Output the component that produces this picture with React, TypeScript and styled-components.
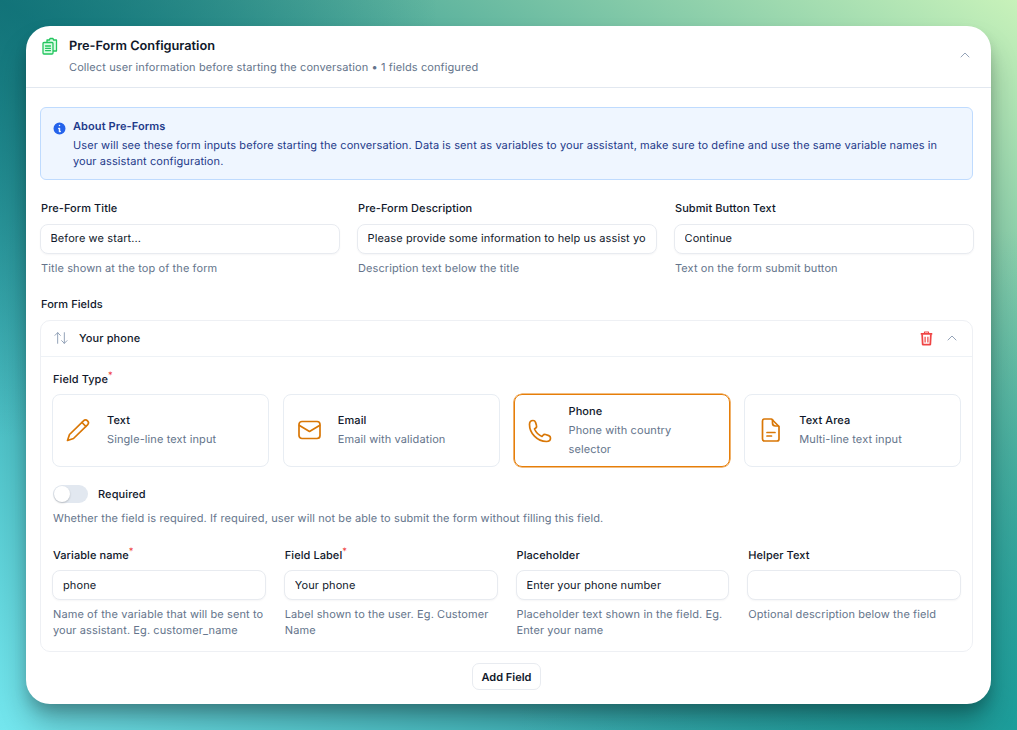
import React from "react"
import styled, { createGlobalStyle } from "styled-components"
import { ArrowUpDown, ChevronUp } from "lucide-react"
import { HiInformationCircle } from "react-icons/hi"

const Global = createGlobalStyle`
  html, body { margin: 0; padding: 0; }
  body {
    font-family: Inter, "Liberation Sans", sans-serif;
    color: #0f172a;
    text-rendering: geometricPrecision;
    -webkit-font-smoothing: antialiased;
  }
  * { box-sizing: border-box; }
  input, button { text-rendering: geometricPrecision; }
`

const Page = styled.div`
  width: 1017px;
  height: 730px;
  overflow: hidden;
  padding: 26px;
  background:
    radial-gradient(circle at 100% 100%, rgba(32, 165, 160, 0.7), rgba(32, 165, 160, 0) 40%),
    radial-gradient(circle at 0% 0%, rgba(16, 105, 112, 0.7), rgba(16, 105, 112, 0) 35%),
    linear-gradient(to top right, #74e6ee 0%, #178a8c 50%, #c8f2ba 100%);
`

const Card = styled.div`
  height: 678px;
  background: #fff;
  border-radius: 24px;
  box-shadow: 0 20px 30px -3px rgba(0, 0, 0, 0.28), 0 8px 14px -2px rgba(0, 0, 0, 0.18);
  overflow: hidden;
`

const Header = styled.div`
  height: 62px;
  border-bottom: 1px solid #e2e8f0;
  padding: 11px 18px 0 16px;
  display: flex;
  gap: 11px;
`

const HeadText = styled.div`
  flex: 1;
  margin-top: 1.500px;
`

const HeadChevron = styled.div`
  margin-top: 10px;
  line-height: 0;
  color: #94a3b8;
`

const Title = styled.div`
  font-size: 12.750px;
  font-weight: 600;
  line-height: 16px;
`

const Subtitle = styled.div`
  font-size: 11px;
  line-height: 16px;
  margin-top: 4.500px;
  color: #64748b;
  letter-spacing: 0.1px;
`

const Body = styled.div`
  padding: 19px 18px 0 14px;
`

const InfoBox = styled.div`
  height: 73px;
  border: 1px solid #bfdbfe;
  border-radius: 6px;
  background: #eff6ff;
  padding: 10px 12px 10px 11px;
  display: flex;
  gap: 6px;
  color: #1e3a8a;
  font-size: 11px;
  line-height: 16px;
  letter-spacing: 0.09px;
`

const InfoIcon = styled.div`
  color: #2563eb;
  padding-top: 3px;
  line-height: 0;
`

const InfoTitle = styled.div`
  font-weight: 600;
  margin-bottom: 3px;
`

const ThreeCols = styled.div`
  display: grid;
  grid-template-columns: repeat(3, 1fr);
  gap: 18px;
  margin-top: 20px;
`

const FourCols = styled.div<{ $gap: number }>`
  display: grid;
  grid-template-columns: repeat(4, 1fr);
  gap: ${(p) => p.$gap}px;
`

const Label = styled.div`
  padding-left: 1px;
  font-size: 11px;
  font-weight: 500;
  line-height: 16px;
  color: #0f172a;
  letter-spacing: 0.07px;
  sup {
    color: #ef4444;
    font-size: 9px;
    line-height: 0;
  }
`

const Input = styled.input`
  display: block;
  width: 100%;
  height: 30px;
  margin-top: 7px;
  padding: 0 10px;
  border: 1px solid #e8ebf0;
  border-radius: 8px;
  outline: 0;
  background: #fff;
  box-shadow: 0 1px 2px rgba(15, 23, 42, 0.04);
  font-family: inherit;
  font-size: 11px;
  letter-spacing: 0.1px;
  color: #0f172a;
`

const TopInput = styled(Input)`
  width: calc(100% + 1px);
  margin: 8px -0.5px 0;
  padding-bottom: 2px;
`

const Help = styled.div`
  padding-left: 1px;
  font-size: 11px;
  line-height: 16px;
  margin-top: 6px;
  color: #64748b;
  letter-spacing: 0.1px;
`

const SectionLabel = styled(Label)`
  margin-top: 20px;
`

const FieldCard = styled.div`
  height: 332px;
  margin-top: 8px;
  border: 1px solid #eef0f4;
  border-radius: 10px;
`

const FieldHead = styled.div`
  height: 36px;
  border-bottom: 1px solid #eef2f6;
  padding: 0 12px 1px 12px;
  display: flex;
  align-items: center;
  gap: 10px;
  font-size: 11px;
  font-weight: 500;
  letter-spacing: 0.1px;
  span {
    flex: 1;
  }
`

const DeleteIcon = styled.div`
  margin-right: 1.500px;
  line-height: 0;
`

const FieldBody = styled.div`
  padding: 14px 11px 0;
`

const TypeCard = styled.div<{ $active?: boolean }>`
  height: 73px;
  margin-top: 7px;
  border: 1px solid ${(p) => (p.$active ? "#e67e09" : "#e8edf3")};
  box-shadow: ${(p) => (p.$active ? "0 0 0 0.6px #e67e09" : "none")};
  border-radius: 8px;
  padding: 0 13px ${(p) => (p.$active ? 0 : 1)}px;
  display: flex;
  align-items: center;
  gap: 17px;
  color: #d97706;
  svg {
    flex: none;
  }
`

const TypeText = styled.div`
  line-height: 19px;
  font-size: 11px;
  letter-spacing: 0.1px;
  color: #64748b;
  b {
    display: block;
    font-weight: 500;
    color: #0f172a;
  }
`

const ToggleRow = styled.div`
  display: flex;
  align-items: center;
  gap: 10px;
  margin-top: 18px;
  font-size: 11px;
  font-weight: 500;
  letter-spacing: 0.1px;
`

const Toggle = styled.div`
  width: 35px;
  height: 18px;
  border-radius: 9px;
  background: #e2e8f0;
  padding: 1px;
  margin-left: 1px;
  &::before {
    content: "";
    display: block;
    width: 16px;
    height: 16px;
    border-radius: 50%;
    background: #fff;
    box-shadow: 0 1px 2px rgba(0, 0, 0, 0.2);
  }
`

const RequiredHelp = styled(Help)`
  margin-top: 7px;
`

const FieldGrid = styled(FourCols)`
  margin-top: 21px;
`

const Footer = styled.div`
  display: flex;
  justify-content: center;
  margin-top: 11px;
`

const AddButton = styled.button`
  width: 69px;
  height: 27px;
  padding: 0;
  border: 1px solid #e8ebf0;
  border-radius: 7px;
  background: #fff;
  font-family: inherit;
  font-size: 11px;
  font-weight: 600;
  color: #0f172a;
`

const Clipboards = () => (
  <svg width="16" height="18" viewBox="0 0 16 18" fill="none" stroke="#22c55e" strokeWidth="1.3" strokeLinejoin="round" strokeLinecap="round">
    <path d="M5 5V3h2.500L8 1.500h3l.5 1.500h3v11H11" fill="#dcfce7" />
    <rect x="1" y="5.500" width="10" height="11.500" rx="1" fill="#dcfce7" />
    <path d="M3.500 9h5M3.500 11.300h5M3.500 13.600h5" />
  </svg>
)

const iconProps = {
  width: 24,
  height: 24,
  viewBox: "0 0 24 24",
  fill: "none",
  stroke: "currentColor",
  strokeWidth: 1.7,
  strokeLinejoin: "round" as const,
  strokeLinecap: "round" as const,
}

const PencilIcon = () => (
  <svg {...iconProps}>
    <path d="M3.500 16.500L17.500 2.800a2.800 2.800 0 0 1 4 4L7.500 20.500 1.500 22.500z" />
    <path d="M16 4.500l3.800 3.800" />
  </svg>
)

const MailIcon = () => (
  <svg {...iconProps}>
    <rect x="2" y="3.500" width="21" height="17" rx="3" />
    <path d="M2.500 7.500l10 6 10-6" />
  </svg>
)

const PhoneIcon = () => (
  <svg {...iconProps}>
    <path d="M5 1.500C3 1.500 1.500 3.200 1.500 5.500 1.500 14 9 22.500 18.500 22.500c2.500 0 4-1.500 4-3.500 0-1.200-.7-2-1.700-2.400l-3.300-1.100c-1-.3-1.900 0-2.500.8l-1 1.200C10.500 16 8 13.500 6.500 10l1.300-1c.8-.6 1-1.500.7-2.400l-1-3.300C7.100 2.200 6.200 1.500 5 1.500z" />
  </svg>
)

const DocIcon = () => (
  <svg {...iconProps}>
    <path d="M6.500 1h7l7.500 7.500V21c0 1.100-.9 2-2 2H6.500c-1.100 0-2-.9-2-2V3c0-1.100.9-2 2-2z" />
    <path d="M14.500 1.500V5c0 1.600 1.300 3 3 3h3M9 14.500h8M9 18h4.500" />
  </svg>
)

const TrashIcon = () => (
  <svg width="13" height="15" viewBox="0 0 14 16" fill="none" stroke="#ef4444" strokeWidth="1.900" strokeLinejoin="round">
    <path d="M4.800 2.500V1h4.400v1.500" strokeWidth="1.200" />
    <path d="M.800 3h12.400" />
    <path d="M2.300 3.500l.6 11h8.200l.6-11" />
    <path d="M5.500 6v6.300M8.500 6v6.300" strokeWidth="1.300" />
  </svg>
)

const types = [
  { name: "Text", desc: "Single-line text input", icon: <PencilIcon /> },
  { name: "Email", desc: "Email with validation", icon: <MailIcon /> },
  { name: "Phone", desc: "Phone with country selector", icon: <PhoneIcon />, active: true },
  { name: "Text Area", desc: "Multi-line text input", icon: <DocIcon /> },
]

const formFields = [
  { label: "Pre-Form Title", value: "Before we start...", help: "Title shown at the top of the form" },
  { label: "Pre-Form Description", value: "Please provide some information to help us assist you better", help: "Description text below the title" },
  { label: "Submit Button Text", value: "Continue", help: "Text on the form submit button" },
]

const fieldInputs = [
  { label: "Variable name", req: true, value: "phone", help: "Name of the variable that will be sent to your assistant. Eg. customer_name" },
  { label: "Field Label", req: true, value: "Your phone", help: "Label shown to the user. Eg. Customer Name" },
  { label: "Placeholder", value: "Enter your phone number", help: "Placeholder text shown in the field. Eg. Enter your name" },
  { label: "Helper Text", value: "", help: "Optional description below the field" },
]

export default function App() {
  return (
    <Page>
      <Global />
      <Card>
        <Header>
          <Clipboards />
          <HeadText>
            <Title>Pre-Form Configuration</Title>
            <Subtitle>Collect user information before starting the conversation • 1 fields configured</Subtitle>
          </HeadText>
          <HeadChevron>
            <ChevronUp size={16} strokeWidth={1.5} />
          </HeadChevron>
        </Header>
        <Body>
          <InfoBox>
            <InfoIcon>
              <HiInformationCircle size={15} />
            </InfoIcon>
            <div>
              <InfoTitle>About Pre-Forms</InfoTitle>
              User will see these form inputs before starting the conversation. Data is sent as variables to your assistant, make sure to define and use the same variable names in your assistant configuration.
            </div>
          </InfoBox>
          <ThreeCols>
            {formFields.map((f) => (
              <div key={f.label}>
                <Label>{f.label}</Label>
                <TopInput readOnly value={f.value} />
                <Help>{f.help}</Help>
              </div>
            ))}
          </ThreeCols>
          <SectionLabel>Form Fields</SectionLabel>
          <FieldCard>
            <FieldHead>
              <ArrowUpDown size={16} strokeWidth={1.5} color="#94a3b8" />
              <span>Your phone</span>
              <DeleteIcon>
                <TrashIcon />
              </DeleteIcon>
              <ChevronUp size={16} strokeWidth={1.5} color="#94a3b8" />
            </FieldHead>
            <FieldBody>
              <Label>
                Field Type<sup>*</sup>
              </Label>
              <FourCols $gap={14}>
                {types.map((t) => (
                  <TypeCard key={t.name} $active={t.active}>
                    {t.icon}
                    <TypeText>
                      <b>{t.name}</b>
                      {t.desc}
                    </TypeText>
                  </TypeCard>
                ))}
              </FourCols>
              <ToggleRow>
                <Toggle />
                Required
              </ToggleRow>
              <RequiredHelp>Whether the field is required. If required, user will not be able to submit the form without filling this field.</RequiredHelp>
              <FieldGrid $gap={18}>
                {fieldInputs.map((f) => (
                  <div key={f.label}>
                    <Label>
                      {f.label}
                      {f.req && <sup>*</sup>}
                    </Label>
                    <Input readOnly value={f.value} />
                    <Help>{f.help}</Help>
                  </div>
                ))}
              </FieldGrid>
            </FieldBody>
          </FieldCard>
          <Footer>
            <AddButton>Add Field</AddButton>
          </Footer>
        </Body>
      </Card>
    </Page>
  )
}
